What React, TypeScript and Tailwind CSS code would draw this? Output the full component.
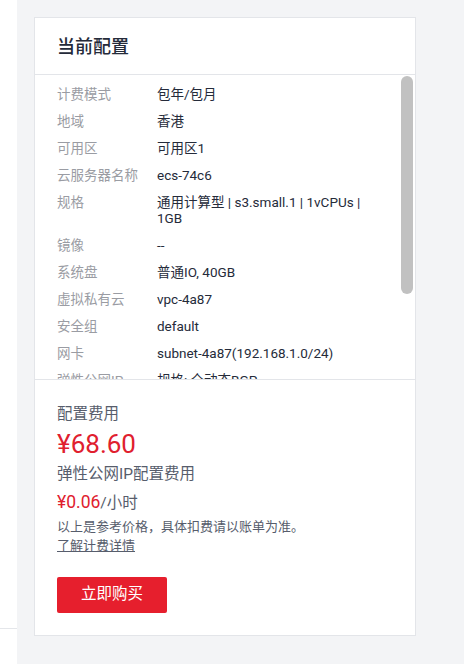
import React from 'react';

interface ConfigRow {
  label: string;
  value: React.ReactNode;
}

const rows: ConfigRow[] = [
  { label: '计费模式', value: '包年/包月' },
  { label: '地域', value: '香港' },
  { label: '可用区', value: '可用区1' },
  { label: '云服务器名称', value: 'ecs-74c6' },
  {
    label: '规格',
    value: (
      <>
        通用计算型 | s3.small.1 | 1vCPUs |<br />
        1GB
      </>
    ),
  },
  { label: '镜像', value: '--' },
  { label: '系统盘', value: '普通IO, 40GB' },
  { label: '虚拟私有云', value: 'vpc-4a87' },
  { label: '安全组', value: 'default' },
  { label: '网卡', value: 'subnet-4a87(192.168.1.0/24)' },
  { label: '弹性公网IP', value: '规格: 全动态BGP' },
  { label: '带宽', value: '按流量计费 | 5Mbit/s' },
];

const font = { fontFamily: 'Roboto, "Noto Sans CJK SC", sans-serif' };

const App = () => {
  return (
    <div className="flex h-[664px] w-[464px] bg-[#f3f4f6]" style={font}>
      {/* 왼쪽 흰색 영역 */}
      <div className="w-[17px] bg-white">
        <div className="h-[629px] border-b border-[#e4e6ea]" />
      </div>

      <div className="pl-[17px] pt-[17px]">
        <div className="flex h-[619px] w-[382px] flex-col border border-[#e3e5e9] bg-white">
          {/* 헤더 */}
          <div className="flex h-[57px] shrink-0 items-center border-b border-[#e3e5e9] px-[22px]">
            <span className="text-[18px] font-medium text-[#252b3a]">当前配置</span>
          </div>

          {/* 스크롤 영역 */}
          <div className="relative h-[304px] shrink-0 overflow-hidden">
            <div className="flex flex-col gap-[11px] pl-[22px] pr-[30px] pt-[11px]">
              {rows.map((row) => (
                <div key={row.label} className="flex text-[13.5px] leading-[16px]">
                  <span className="w-[100px] shrink-0 text-[#9a9ca3]">{row.label}</span>
                  <span className="text-[#252b3a]">{row.value}</span>
                </div>
              ))}
            </div>
            <div className="absolute right-[2px] top-[1px] h-[218px] w-[12px] rounded-full bg-[#c1c1c1]" />
          </div>

          {/* 요금 영역 */}
          <div className="flex flex-1 flex-col border-t border-[#e3e5e9] px-[22px] pt-[24px]">
            <div className="text-[15.5px] leading-[20px] text-[#575d6c]">配置费用</div>
            <div className="mt-[4px] text-[26px] leading-[32px] text-[#e0202e]">¥68.60</div>
            <div className="mt-[4px] text-[15.5px] leading-[20px] text-[#575d6c]">弹性公网IP配置费用</div>
            <div className="mt-[8px] flex h-[20px] items-baseline text-[15.5px] leading-[20px] text-[#575d6c]">
              <span className="text-[17.5px] text-[#e0202e]">¥0.06</span>
              <span>/小时</span>
            </div>
            <div className="mt-[5px] text-[13px] leading-[19px] text-[#575d6c]">
              以上是参考价格，具体扣费请以账单为准。
            </div>
            <a href="#" className="w-fit text-[13px] leading-[19px] text-[#575d6c] underline">
              了解计费详情
            </a>
            <button className="mt-[22px] h-[36px] w-[110px] rounded-[2px] bg-[#e61f2d] text-[15.5px] text-white">
              立即购买
            </button>
          </div>
        </div>
      </div>
    </div>
  );
};

export default App;
